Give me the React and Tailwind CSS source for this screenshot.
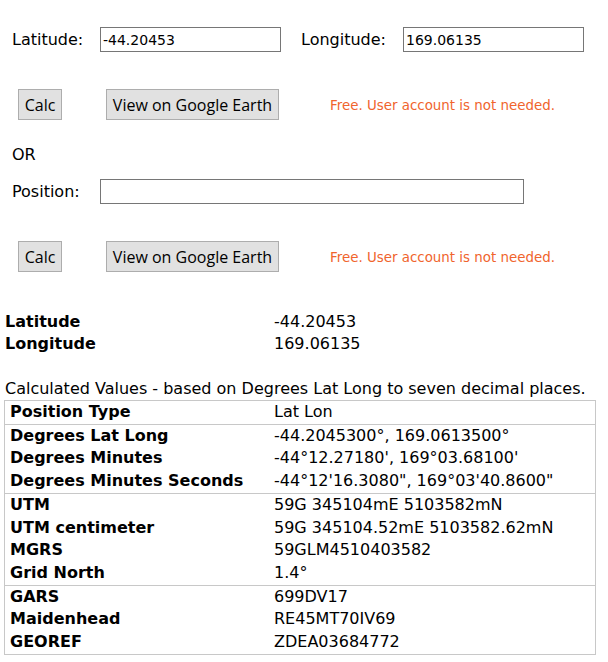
import React from "react";

const font = { fontFamily: '"DejaVu Sans", Verdana, sans-serif' };

const groups = [
  [["Position Type", "Lat Lon"]],
  [
    ["Degrees Lat Long", "-44.2045300°, 169.0613500°"],
    ["Degrees Minutes", "-44°12.27180', 169°03.68100'"],
    ["Degrees Minutes Seconds", "-44°12'16.3080\", 169°03'40.8600\""],
  ],
  [
    ["UTM", "59G 345104mE 5103582mN"],
    ["UTM centimeter", "59G 345104.52mE 5103582.62mN"],
    ["MGRS", "59GLM4510403582"],
    ["Grid North", "1.4°"],
  ],
  [
    ["GARS", "699DV17"],
    ["Maidenhead", "RE45MT70IV69"],
    ["GEOREF", "ZDEA03684772"],
  ],
];

const Btn = ({ children, className = "" }) => (
  <button
    className={`h-[31px] border border-[#adadad] bg-[#e1e1e1] text-[16px] text-black ${className}`}
    style={{ fontFamily: '"Open Sans", "Noto Sans", sans-serif' }}
  >
    {children}
  </button>
);

const ButtonRow = ({ className = "" }) => (
  <div className={`flex items-center ${className}`}>
    <Btn className="ml-[18px] w-[44px]">Calc</Btn>
    <Btn className="ml-[44px] w-[173px]">View on Google Earth</Btn>
    <span className="ml-[51px] pt-[4px] text-[13.4px] text-[#f0642d]">
      Free. User account is not needed.
    </span>
  </div>
);

export default function App() {
  return (
    <div className="w-[608px] min-h-[662px] bg-white text-black" style={font}>
      <div className="flex items-center pl-[12px] pt-[27px]">
        <span className="w-[88px] text-[16px]">Latitude:</span>
        <input
          readOnly
          value="-44.20453"
          className="h-[25px] w-[181px] border border-[#767676] px-[2px] text-[14px] outline-none"
          style={font}
        />
        <span className="ml-[20px] w-[102px] text-[16px]">Longitude:</span>
        <input
          readOnly
          value="169.06135"
          className="h-[25px] w-[181px] border border-[#767676] px-[2px] text-[14px] outline-none"
          style={font}
        />
      </div>

      <ButtonRow className="mt-[37px]" />

      <div className="mt-[25px] pl-[12px] text-[16px] leading-[20px]">OR</div>

      <div className="mt-[14px] flex items-center pl-[12px]">
        <span className="w-[88px] text-[16px]">Position:</span>
        <input
          readOnly
          value=""
          className="h-[25px] w-[424px] border border-[#767676] px-[2px] text-[14px] outline-none"
          style={font}
        />
      </div>

      <ButtonRow className="mt-[37px]" />

      <div className="mt-[39px] pl-[5px] text-[16px] leading-[22px]">
        <div className="flex">
          <span className="w-[269px] font-bold">Latitude</span>
          <span>-44.20453</span>
        </div>
        <div className="flex">
          <span className="w-[269px] font-bold">Longitude</span>
          <span>169.06135</span>
        </div>
      </div>

      <div className="mt-[23px] pl-[5px] text-[16px] leading-[22px]">
        Calculated Values - based on Degrees Lat Long to seven decimal places.
      </div>

      <div className="ml-[4px] w-[592px] border border-[#c8c8c8] text-[16px] leading-[22.7px]">
        {groups.map((rows, gi) => (
          <div
            key={gi}
            className={gi > 0 ? "border-t border-[#c8c8c8]" : ""}
          >
            {rows.map(([label, value]) => (
              <div key={label} className="flex px-[5px]">
                <span className="w-[264px] font-bold">{label}</span>
                <span>{value}</span>
              </div>
            ))}
          </div>
        ))}
      </div>
    </div>
  );
}
